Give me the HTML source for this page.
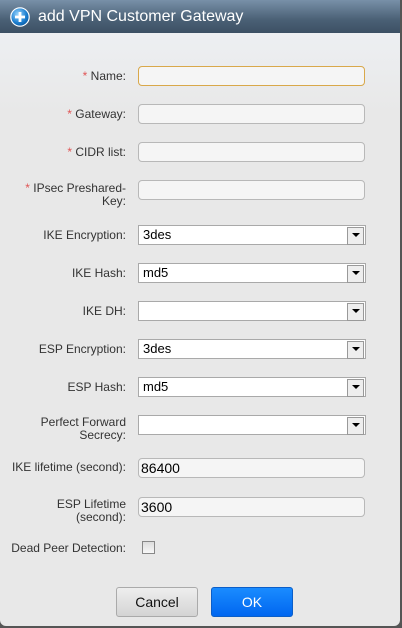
<!DOCTYPE html>
<html><head><style>
*{box-sizing:border-box;margin:0;padding:0}
body{width:402px;height:628px;background:#555;font-family:"Liberation Sans",sans-serif;position:relative;overflow:hidden}
.dlg{position:absolute;left:0;top:0;width:400px;height:626px;background:#e8e8e8;border-radius:0 0 6px 6px;overflow:hidden}
.hd{height:33px;background:linear-gradient(#7890a8,#4a6075 60%,#3c5064);color:#fff;font-size:16px;line-height:33px;padding-left:38px;position:relative}
.ic{position:absolute;left:10px;top:7px;width:20px;height:20px}
.bodyg{position:absolute;top:33px;left:0;width:400px;height:80px;background:linear-gradient(#edeff2,#e8e8e8)}
.lb{position:absolute;right:274px;font-size:12px;color:#333;text-align:right;line-height:13px}
.lb i{color:#e05555;font-style:normal}
.in{position:absolute;left:138px;width:227px;height:20px;background:#f5f5f5;border:1px solid #b8b8b8;border-radius:4px;font-size:14px;color:#000;padding-left:2px;line-height:18px}
.sel{position:absolute;left:138px;width:228px;height:20px;background:#fff;border:1px solid #a9a9a9;font-size:13px;line-height:18px;padding-left:4px;color:#000}
.sel:after{content:"";position:absolute;right:1px;top:1px;width:15px;height:16px;border:1px solid #999;background:#eee}
.sel:before{content:"";position:absolute;right:5px;top:7px;border-left:4px solid transparent;border-right:4px solid transparent;border-top:4px solid #000;z-index:1}
.btn{position:absolute;top:587px;height:30px;width:82px;border-radius:3px;font-size:14px;text-align:center;line-height:28px}
</style></head><body>
<div class="dlg">
<div class="hd"><svg class="ic" viewBox="0 0 20 20"><defs><radialGradient id="g" cx="40%" cy="35%" r="65%"><stop offset="0" stop-color="#9ad6ff"/><stop offset="0.7" stop-color="#1d7fd0"/><stop offset="1" stop-color="#0d5fa8"/></radialGradient></defs><circle cx="10" cy="10" r="9.2" fill="url(#g)" stroke="#fff" stroke-width="1.2"/><rect x="5" y="8.6" width="10" height="2.8" fill="#fff"/><rect x="8.6" y="5" width="2.8" height="10" fill="#fff"/></svg>add VPN Customer Gateway</div>
<div class="bodyg"></div>
<div class="lb" style="top:70px"><i>*</i> Name:</div>
<div class="in" style="top:66px;border:1px solid #d9a84a"></div>
<div class="lb" style="top:108px"><i>*</i> Gateway:</div>
<div class="in" style="top:104px"></div>
<div class="lb" style="top:146px"><i>*</i> CIDR list:</div>
<div class="in" style="top:142px"></div>
<div class="lb" style="top:182px"><i>*</i> IPsec Preshared-<br>Key:</div>
<div class="in" style="top:180px"></div>
<div class="lb" style="top:229px">IKE Encryption:</div>
<div class="sel" style="top:225px">3des</div>
<div class="lb" style="top:267px">IKE Hash:</div>
<div class="sel" style="top:263px">md5</div>
<div class="lb" style="top:305px">IKE DH:</div>
<div class="sel" style="top:301px"></div>
<div class="lb" style="top:343px">ESP Encryption:</div>
<div class="sel" style="top:339px">3des</div>
<div class="lb" style="top:381px">ESP Hash:</div>
<div class="sel" style="top:377px">md5</div>
<div class="lb" style="top:416px">Perfect Forward<br>Secrecy:</div>
<div class="sel" style="top:415px"></div>
<div class="lb" style="top:461px">IKE lifetime (second):</div>
<div class="in" style="top:458px">86400</div>
<div class="lb" style="top:498px">ESP Lifetime<br>(second):</div>
<div class="in" style="top:497px">3600</div>
<div class="lb" style="top:542px">Dead Peer Detection:</div>
<div style="position:absolute;left:142px;top:541px;width:13px;height:13px;border:1px solid #888;background:linear-gradient(#ddd,#f8f8f8)"></div>
<div class="btn" style="left:116px;background:linear-gradient(#eee,#d4d4d4);border:1px solid #aaa;color:#111">Cancel</div>
<div class="btn" style="left:211px;background:linear-gradient(#1a8cff,#0066f0);border:1px solid #0b5ec8;color:#fff">OK</div>
</div>
</body></html>
